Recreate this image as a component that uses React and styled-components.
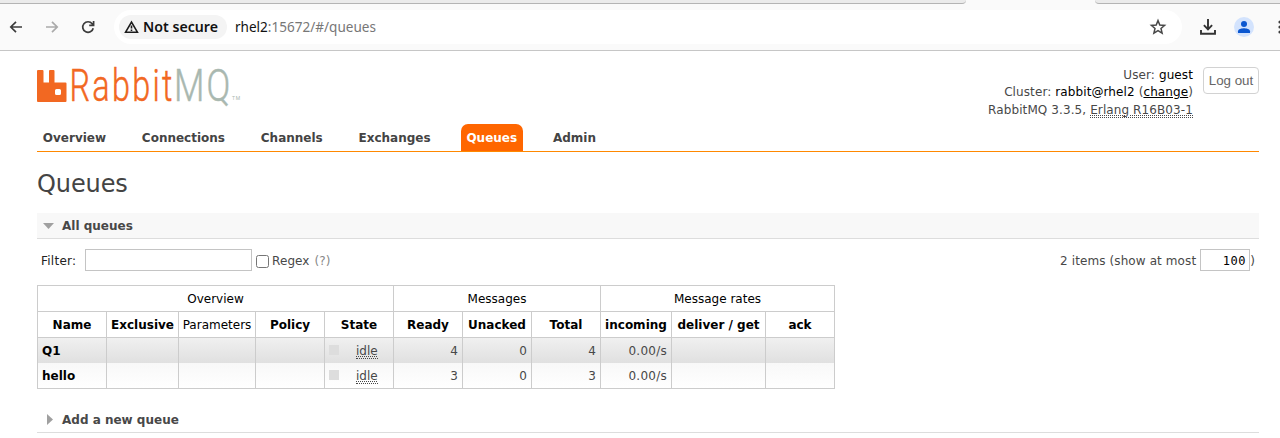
import React from "react";
import styled, { createGlobalStyle } from "styled-components";

const Global = createGlobalStyle`
  * { box-sizing: border-box; }
  html, body { margin: 0; background: #fff; overflow: hidden; }
  body { font: 12px/17px "DejaVu Sans", sans-serif; color: #484848; }
`;

const Page = styled.div`
  width: 1280px;
  height: 438px;
  overflow: hidden;
`;

/* browser chrome */
const Chrome = styled.div`
  height: 51px;
  background: #fafafa;
  border-bottom: 1px solid #c6c6c6;
`;
const TabStrip = styled.div`
  display: flex;
  justify-content: space-between;
  height: 4px;
`;
const StripPart = styled.div`
  width: ${(p) => p.$w}px;
  background: #ebebeb;
  border-bottom: 1px solid #b4b4b4;
  border-radius: ${(p) => (p.$left ? "0 0 7px 0" : "0 0 0 7px")};
`;
const Toolbar = styled.div`
  display: flex;
  align-items: center;
  height: 46px;
  width: 1290px;
`;
const ToolIcon = styled.svg`
  flex: none;
  display: block;
  margin-left: ${(p) => p.$ml || 0}px;
`;
const Omnibox = styled.div`
  display: flex;
  align-items: center;
  width: 1068px;
  height: 34px;
  margin-left: 18px;
  padding: 0 14px 0 5px;
  border-radius: 17px;
  background: #fff;
`;
const Chip = styled.div`
  display: flex;
  align-items: center;
  width: 108px;
  height: 24px;
  border-radius: 12px;
  background: #f4f4f4;
`;
const ChromeText = styled.svg`
  display: block;
  flex: none;
  overflow: visible;
  font-family: "Noto Sans", "Open Sans", sans-serif;
  font-size: 14px;
  margin-left: ${(p) => p.$ml}px;
`;
const Spacer = styled.div`
  flex: 1;
`;
const Avatar = styled.div`
  flex: none;
  width: 20px;
  height: 20px;
  margin-left: 18px;
  border-radius: 50%;
  background: #d3e3fd;
  overflow: hidden;
`;

/* page */
const Content = styled.div`
  width: 1222px;
  margin-left: 37px;
`;
const Header = styled.header`
  display: flex;
  justify-content: space-between;
  align-items: flex-start;
  height: 73px;
  padding-top: 15px;
`;
const Logo = styled.svg`
  display: block;
  overflow: visible;
  font-family: "Roboto", sans-serif;
`;
const Account = styled.div`
  display: flex;
  align-items: flex-start;
`;
const Info = styled.div`
  text-align: right;
  line-height: 17.4px;
  padding-top: 1px;
  margin-right: 10px;
  letter-spacing: 0.1px;
  b { font-weight: normal; color: #000; }
  u { color: #000; }
`;
const Dotted = styled.span`
  display: inline-block;
  line-height: 14px;
  border-bottom: 1px dotted #484848;
  text-decoration: underline dotted;
`;
const LogOut = styled.button`
  width: 56px;
  height: 27px;
  margin-top: 1px;
  padding: 0;
  border: 1px solid #d2d2d2;
  border-radius: 4px;
  background: #fff;
  color: #666;
  font: 13.333px "Liberation Sans", Arial, sans-serif;
`;
const Nav = styled.nav`
  display: flex;
  height: 28px;
  border-bottom: 1px solid #ff8800;
`;
const NavItem = styled.a`
  height: 27px;
  padding: 1px 5.8px 0;
  margin-right: 24.2px;
  border-radius: 7px 7px 0 0;
  font-weight: bold;
  line-height: 27px;
  color: ${(p) => (p.$active ? "#fff" : "#444")};
  background: ${(p) => (p.$active ? "#ff6600" : "transparent")};
`;
const Title = styled.h1`
  height: 61px;
  margin: 0;
  padding-top: 17px;
  font-size: 24px;
  line-height: 30px;
  font-weight: normal;
  letter-spacing: -0.1px;
  color: #444;
`;
const Section = styled.h2`
  display: flex;
  align-items: center;
  height: 26px;
  margin: 0;
  padding: 1px 0 0 6px;
  border-bottom: 1px solid #ddd;
  background: ${(p) => (p.$open ? "#f8f8f8" : "#fff")};
  font-size: 12px;
  color: #484848;
  svg { margin-right: 7px; }
`;
const FilterBar = styled.div`
  display: flex;
  align-items: center;
  height: 46px;
  padding: 0 4px 4px 4px;
  letter-spacing: 0.1px;
`;
const Label = styled.label`
  width: 44px;
  padding-top: 2px;
  letter-spacing: 0.25px;
  color: #222;
`;
const BarText = styled.span`
  padding-top: 2px;
  margin-right: ${(p) => p.$mr || 0}px;
`;
const TextBox = styled.input`
  width: ${(p) => p.$w}px;
  height: 22px;
  padding: 2px 3px 0;
  border: 1px solid #c4c4c4;
  background: #fff;
  color: #000;
  font: 12px "DejaVu Sans Mono", monospace;
  letter-spacing: ${(p) => p.$ls || 0}px;
  text-align: right;
`;
const Check = styled.input`
  width: 13px;
  height: 13px;
  margin: 3px 3px 0 4px;
`;
const Help = styled(BarText)`
  margin-left: 5px;
  color: #888;
`;
const Table = styled.table`
  width: 797px;
  table-layout: fixed;
  border-collapse: collapse;
  color: #484848;
`;
const HeadCell = styled.th`
  height: 26px;
  padding: 2px 0 0;
  border: 1px solid #ccc;
  color: #000;
  font-weight: ${(p) => (p.$plain ? "normal" : "bold")};
`;
const Row = styled.tr`
  height: 25px;
  background: ${(p) =>
    p.$dark ? "linear-gradient(#f0f0f0, #e0e0e0)" : "linear-gradient(#f8f8f8, #ffffff)"};
  &:last-child { height: 26px; }
`;
const Cell = styled.td`
  padding: 3px 4px 0;
  border: solid #ccc;
  border-width: 0 1px;
  text-align: right;
  letter-spacing: ${(p) => (p.$rate ? 0.25 : 0)}px;
  tr:last-child > & { border-bottom-width: 1px; }
`;
const NameCell = styled(Cell)`
  text-align: left;
  font-weight: bold;
  color: #000;
`;
const State = styled.div`
  display: flex;
  align-items: center;
  &::before {
    content: "";
    width: 10px;
    height: 10px;
    margin: -3px 17px 0 0;
    background: #ddd;
  }
`;
const Gap = styled.div`
  height: 18px;
`;

const cols = [69, 72, 77, 69, 69, 69, 69, 69, 71, 94, 69];
const heads = ["Name", "Exclusive", "Parameters", "Policy", "State", "Ready", "Unacked", "Total", "incoming", "deliver / get", "ack"];
const queues = [
  { name: "Q1", ready: 4, unacked: 0, total: 4 },
  { name: "hello", ready: 3, unacked: 0, total: 3 },
];
const tabs = ["Overview", "Connections", "Channels", "Exchanges", "Queues", "Admin"];

function BrowserBar() {
  return (
    <Chrome>
      <TabStrip>
        <StripPart $left $w={966} />
        <StripPart $w={185} />
      </TabStrip>
      <Toolbar>
        <ToolIcon $ml={8} width="16" height="16" viewBox="0 0 16 16" fill="none" stroke="#3c3c3c" strokeWidth="1.7">
          <path d="M14 8H3.2M8 2.8L2.8 8L8 13.2" />
        </ToolIcon>
        <ToolIcon $ml={20} width="16" height="16" viewBox="0 0 16 16" fill="none" stroke="#aaa" strokeWidth="1.7">
          <path d="M2 8H12.8M8 2.8L13.2 8L8 13.2" />
        </ToolIcon>
        <ToolIcon $ml={20} width="16" height="16" viewBox="0 0 16 16" fill="none" stroke="#3c3c3c" strokeWidth="1.7">
          <path d="M13.2 9.2A5.3 5.3 0 1 1 12.2 4.8L13.6 6.2M13.6 2V6.4H9.2" />
        </ToolIcon>
        <Omnibox>
          <Chip>
            <ToolIcon $ml={5} width="15" height="14" viewBox="0 0 15 14" fill="none" stroke="#1c1c1c" strokeWidth="1.6">
              <path d="M1.6 12.2L7.5 2L13.4 12.2Z" />
              <path d="M7.5 5.5V8.6M7.5 9.5V11" />
            </ToolIcon>
            <ChromeText $ml={4} width="75" height="20" fontWeight="600">
              <text x="0" y="15" fill="#111" textLength="75" lengthAdjust="spacingAndGlyphs">Not secure</text>
            </ChromeText>
          </Chip>
          <ChromeText $ml={8} width="142" height="20">
            <text x="0" y="15" fill="#777" textLength="141" lengthAdjust="spacingAndGlyphs">
              <tspan fill="#111">rhel2</tspan>:15672/#/queues
            </text>
          </ChromeText>
          <Spacer />
          <ToolIcon width="20" height="20" viewBox="0 0 20 20" fill="none" stroke="#484848" strokeWidth="1.5">
            <path d="M10 3.6L11.8 8L16.6 8.4L13 11.5L14.1 16.2L10 13.7L5.9 16.2L7 11.5L3.4 8.4L8.2 8Z" />
          </ToolIcon>
        </Omnibox>
        <ToolIcon $ml={18} width="16" height="16" viewBox="0 0 16 16" fill="none" stroke="#333" strokeWidth="1.9">
          <path d="M8 0V10M3.9 6.2L8 10.3L12.1 6.2M1 11V14.8H15V11" />
        </ToolIcon>
        <Avatar>
          <svg width="20" height="20" viewBox="0 0 20 20" fill="#0b57d0">
            <circle cx="10" cy="7" r="3" />
            <path d="M4 16V14.2C4 12 8 11.2 10 11.2S16 12 16 14.2V16Z" />
          </svg>
        </Avatar>
        <ToolIcon $ml={24} width="4" height="16" viewBox="0 0 4 16" fill="#3c3c3c">
          <circle cx="2" cy="3" r="1.6" />
          <circle cx="2" cy="8" r="1.6" />
          <circle cx="2" cy="13" r="1.6" />
        </ToolIcon>
      </Toolbar>
    </Chrome>
  );
}

export default function App() {
  return (
    <Page>
      <Global />
      <BrowserBar />
      <Content>
        <Header>
          <Logo width="204" height="38" viewBox="0 0 204 38">
            <path
              fill="#f26822"
              fillRule="evenodd"
              d="M1 4H5.500Q6.500 4 6.500 5V16.500H12V5Q12 4 13 4H16.500Q17.500 4 17.500 5V16.500H28.500Q29.500 16.500 29.500 17.500V35Q29.500 36 28.500 36H1Q0 36 0 35V5Q0 4 1 4ZM19.500 23Q18 23 18 24.500V27.500Q18 29 19.500 29H22.500Q24 29 24 27.500V24.500Q24 23 22.500 23Z"
            />
            <g fontSize="45" fontWeight="300" strokeWidth="0.5">
              <text transform="scale(0.72 1)" x="45" y="35" fill="#f26822" stroke="#f26822" letterSpacing="3.2">Rabbit</text>
              <text transform="scale(0.78 1)" x="175.500" y="35" fill="#a9b8b0" stroke="#a9b8b0" letterSpacing="3">MQ</text>
            </g>
            <text x="195" y="34" fontSize="5" fill="#a9b8b0" textLength="8">TM</text>
          </Logo>
          <Account>
            <Info>
              <div>User: <b>guest</b></div>
              <div>Cluster: <b>rabbit@rhel2</b> (<u>change</u>)</div>
              <div>RabbitMQ 3.3.5, <Dotted>Erlang R16B03-1</Dotted></div>
            </Info>
            <LogOut>Log out</LogOut>
          </Account>
        </Header>
        <Nav>
          {tabs.map((t) => (
            <NavItem key={t} $active={t === "Queues"}>{t}</NavItem>
          ))}
        </Nav>
        <Title>Queues</Title>
        <Section $open>
          <svg width="12" height="12" viewBox="0 0 12 12" fill="#a0a0a0"><path d="M0 3H11L5.500 9Z" /></svg>
          All queues
        </Section>
        <FilterBar>
          <Label>Filter:</Label>
          <TextBox $w={167} />
          <Check type="checkbox" />
          <BarText>Regex</BarText>
          <Help>(?)</Help>
          <Spacer />
          <BarText $mr={4}>2 items (show at most</BarText>
          <TextBox $w={50} $ls={0.6} defaultValue="100" />
          <BarText>)</BarText>
        </FilterBar>
        <Table>
          <colgroup>{cols.map((w, i) => <col key={i} width={w} />)}</colgroup>
          <thead>
            <tr>
              <HeadCell $plain colSpan={5}>Overview</HeadCell>
              <HeadCell $plain colSpan={3}>Messages</HeadCell>
              <HeadCell $plain colSpan={3}>Message rates</HeadCell>
            </tr>
            <tr>
              {heads.map((h) => <HeadCell key={h} $plain={h === "Parameters"}>{h}</HeadCell>)}
            </tr>
          </thead>
          <tbody>
            {queues.map((q, i) => (
              <Row key={q.name} $dark={i % 2 === 0}>
                <NameCell>{q.name}</NameCell>
                <Cell /><Cell /><Cell />
                <Cell><State><Dotted>idle</Dotted></State></Cell>
                <Cell>{q.ready}</Cell>
                <Cell>{q.unacked}</Cell>
                <Cell>{q.total}</Cell>
                <Cell $rate>0.00/s</Cell>
                <Cell /><Cell />
              </Row>
            ))}
          </tbody>
        </Table>
        <Gap />
        <Section>
          <svg width="12" height="12" viewBox="0 0 12 12" fill="#a0a0a0"><path d="M4 0L10 5.500L4 11Z" /></svg>
          Add a new queue
        </Section>
      </Content>
    </Page>
  );
}
